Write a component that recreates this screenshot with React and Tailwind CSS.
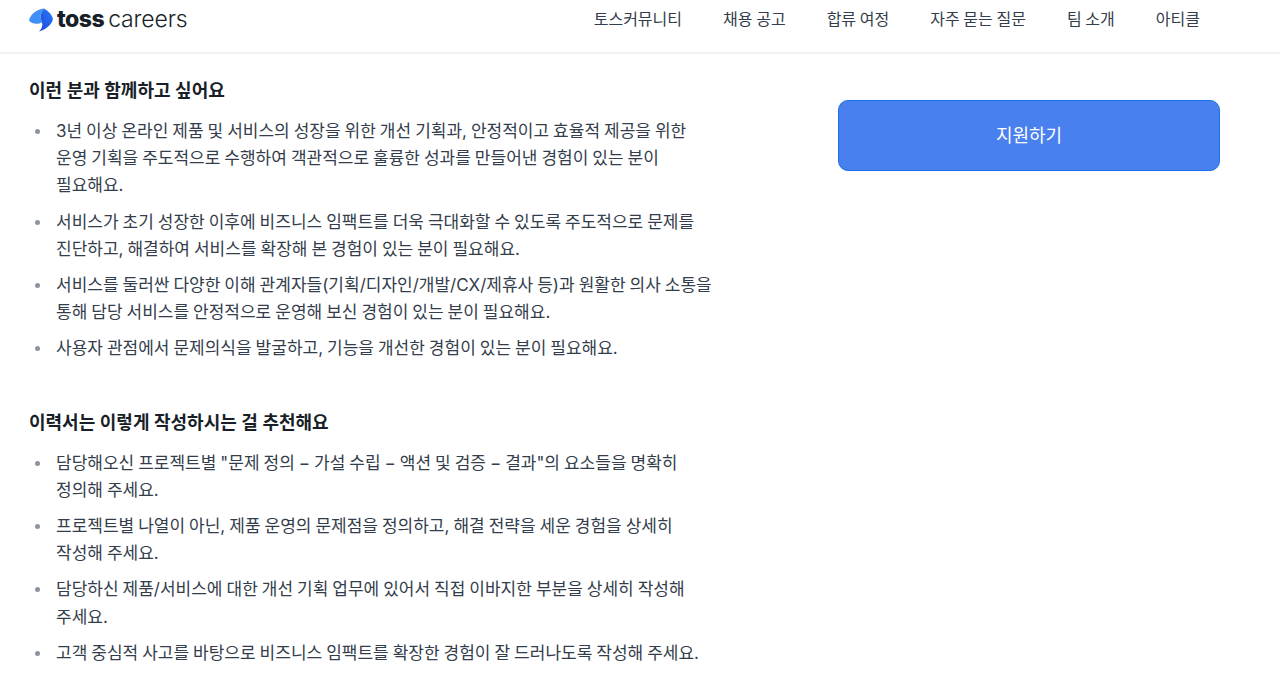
const nav = ["토스커뮤니티", "채용 공고", "합류 여정", "자주 묻는 질문", "팀 소개", "아티클"];
const sections = [
  {
    title: "이런 분과 함께하고 싶어요",
    items: [
      "3년 이상 온라인 제품 및 서비스의 성장을 위한 개선 기획과, 안정적이고 효율적 제공을 위한 운영 기획을 주도적으로 수행하여 객관적으로 훌륭한 성과를 만들어낸 경험이 있는 분이 필요해요.",
      "서비스가 초기 성장한 이후에 비즈니스 임팩트를 더욱 극대화할 수 있도록 주도적으로 문제를 진단하고, 해결하여 서비스를 확장해 본 경험이 있는 분이 필요해요.",
      "서비스를 둘러싼 다양한 이해 관계자들(기획/디자인/개발/CX/제휴사 등)과 원활한 의사 소통을 통해 담당 서비스를 안정적으로 운영해 보신 경험이 있는 분이 필요해요.",
      "사용자 관점에서 문제의식을 발굴하고, 기능을 개선한 경험이 있는 분이 필요해요.",
    ],
  },
  {
    title: "이력서는 이렇게 작성하시는 걸 추천해요",
    items: [
      "담당해오신 프로젝트별 \"문제 정의 − 가설 수립 − 액션 및 검증 − 결과\"의 요소들을 명확히 정의해 주세요.",
      "프로젝트별 나열이 아닌, 제품 운영의 문제점을 정의하고, 해결 전략을 세운 경험을 상세히 작성해 주세요.",
      "담당하신 제품/서비스에 대한 개선 기획 업무에 있어서 직접 이바지한 부분을 상세히 작성해 주세요.",
      "고객 중심적 사고를 바탕으로 비즈니스 임팩트를 확장한 경험이 잘 드러나도록 작성해 주세요.",
    ],
  },
];

function Logo() {
  return (
    <div className="flex items-center">
      <svg width="24" height="24" viewBox="0 0 24 24" className="mr-[4px]">
        <defs>
          <linearGradient id="g" x1="0.9" y1="0.2" x2="0.3" y2="0.9">
            <stop offset="0" stopColor="#2b74f0" />
            <stop offset="1" stopColor="#1a50e4" />
          </linearGradient>
        </defs>
        <path d="M15 0.5 C7 1.5 1 7 0 12.5 C3 16.5 9 16.5 13 14.5 C11 10 11 5 15 0.5 Z" fill="#3f91f5" />
        <path d="M15 0.5 C20 3 23 7 24 11 C23 16 18 21 10 23.5 C13 20.5 14 17.5 13 14.5 C11 10 11 5 15 0.5 Z" fill="url(#g)" />
      </svg>
      <span className="text-[23px] leading-none font-extrabold tracking-[-0.5px] text-[#191f28] font-['Inter',sans-serif]">toss</span>
      <span className="ml-[4px] text-[23px] leading-none font-light tracking-[-0.15px] text-[#191f28] font-['Inter',sans-serif]">careers</span>
    </div>
  );
}

export default function App() {
  return (
    <div className="h-[685px] overflow-hidden bg-white font-['Inter','Noto_Sans_CJK_KR',sans-serif] text-[#333d4b] [word-spacing:-0.8px]">
      <header className="flex h-[54px] items-center justify-between border-b-2 border-[#f0f1f3] pl-[29px] pr-[80px] pb-[13px]">
        <Logo />
        <nav className="mb-[2px] flex gap-[41px] text-[16px] text-[#333d4b]">
          {nav.map((n) => (
            <span key={n}>{n}</span>
          ))}
        </nav>
      </header>
      <main className="flex justify-between pl-[29px] pr-[60px]">
        <div className="w-[688px] break-keep">
          {sections.map((s) => (
            <section key={s.title} className="mb-[23px] pt-[23px]">
              <h3 className="mb-[14px] text-[18px] leading-[27px] font-semibold text-[#191f28] [word-spacing:0px]">{s.title}</h3>
              <ul className="flex flex-col gap-[9px]">
                {s.items.map((t) => (
                  <li key={t} className="flex text-[17px] leading-[27.2px]">
                    <span className="flex h-[27px] w-[27px] shrink-0 items-center justify-start pl-[6px]">
                      <span className="h-[5px] w-[5px] rounded-full bg-[#8b95a1]" />
                    </span>
                    <span>{t}</span>
                  </li>
                ))}
              </ul>
            </section>
          ))}
        </div>
        <div className="pt-[46px]">
          <button className="flex h-[71px] w-[382px] items-center justify-center rounded-[10px] border border-[#1b6fe8] bg-[#4880ee] pb-[1px] text-[18px] text-white">
            지원하기
          </button>
        </div>
      </main>
    </div>
  );
}
